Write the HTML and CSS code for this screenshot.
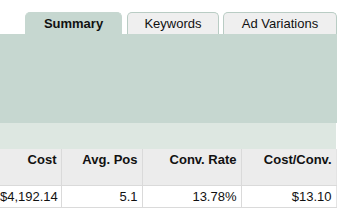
FILE: index.html
```html
<!DOCTYPE html>
<html lang="en">
<head>
    <meta charset="UTF-8">
    <title>Campaign Report</title>
    <link rel="stylesheet" href="styles.css">
</head>
<body>
    <div class="report">
        <div class="tabs">
            <div class="tab active">Summary</div>
            <div class="tab">Keywords</div>
            <div class="tab">Ad Variations</div>
        </div>
        <div class="panel"></div>
        <div class="band"></div>
        <table class="stats">
            <colgroup>
                <col class="c-cost">
                <col class="c-pos">
                <col class="c-rate">
                <col class="c-cpc">
            </colgroup>
            <tr>
                <th>Cost</th>
                <th>Avg. Pos</th>
                <th>Conv. Rate</th>
                <th>Cost/Conv.</th>
            </tr>
            <tr>
                <td>$4,192.14</td>
                <td>5.1</td>
                <td>13.78%</td>
                <td>$13.10</td>
            </tr>
        </table>
    </div>
</body>
</html>
```

FILE: styles.css
```css
body {
    margin: 0;
    background: white;
    font-family: "Liberation Sans", Arial, sans-serif;
    color: #111;
}
.report {
    width: 337px;
}
.tabs {
    display: flex;
    gap: 4px;
    padding: 12px 0 0 25px;
}
.tab {
    box-sizing: border-box;
    height: 22px;
    line-height: 21px;
    font-size: 13px;
    text-align: center;
    background: #efefef;
    border: 1px solid #b9ccc4;
    border-bottom: none;
    border-radius: 5px 5px 0 0;
}
.tab:nth-child(1) { width: 97px; margin-right: 1px; }
.tab:nth-child(2) { width: 92px; }
.tab:nth-child(3) { width: 114px; }
.tab.active {
    background: #c6d7d0;
    border-color: #c6d7d0;
    font-weight: bold;
}
.panel {
    height: 89px;
    background: #c6d7d0;
}
.band {
    height: 26px;
    width: 336px;
    background: #dde7e1;
}
.stats {
    width: 336px;
    table-layout: fixed;
    border-collapse: collapse;
    font-size: 13px;
}
.c-cost { width: 61px; }
.c-pos { width: 81px; }
.c-rate { width: 99px; }
.c-cpc { width: 95px; }
.stats th, .stats td {
    text-align: right;
    white-space: nowrap;
    overflow: hidden;
    padding: 0 4px 0 0;
    border-right: 1px solid #dadada;
    border-bottom: 1px solid #dadada;
}
.stats th:last-child, .stats td:last-child {
    border-right: 1px solid #e4e4e4;
}
.stats th {
    height: 33px;
    padding-top: 3px;
    vertical-align: top;
    background: #ececec;
    font-weight: bold;
}
.stats td {
    height: 21px;
    background: white;
    font-weight: normal;
}
```
